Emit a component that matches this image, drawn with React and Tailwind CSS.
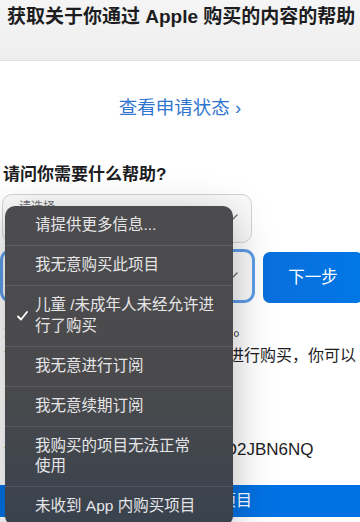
export default function App() {
  const items = [
    { lines: ["请提供更多信息..."] },
    { lines: ["我无意购买此项目"] },
    { lines: ["儿童 /未成年人未经允许进", "行了购买"], checked: true },
    { lines: ["我无意进行订阅"] },
    { lines: ["我无意续期订阅"] },
    { lines: ["我购买的项目无法正常", "使用"] },
    { lines: ["未收到 App 内购买项目"] },
  ];

  return (
    <div className="relative h-[522px] w-[360px] overflow-hidden bg-white font-['Liberation_Sans','Noto_Sans_CJK_SC',sans-serif] text-[#1d1d1f]">
      <header className="h-[61px] border-b border-[#e0e0e0] bg-gradient-to-b from-[#f5f5f5] to-[#eeeeee] pl-[7px] pt-[4px]">
        <h1 className="whitespace-nowrap text-[19px] font-bold leading-[26px]">
          获取关于你通过 Apple 购买的内容的帮助
        </h1>
      </header>

      <div className="mt-[34px] text-center text-[18.5px] leading-[26px] text-[#2f74cf]">
        查看申请状态 ›
      </div>

      <h2 className="mt-[42px] pl-[3px] text-[17px] font-bold leading-[24px]">请问你需要什么帮助?</h2>

      <div className="relative ml-[2px] mt-[7px] h-[49px] w-[250px] rounded-[10px] border border-[#d2d2d7] bg-[#fafafa] pl-[16px] pt-[4px]">
        <div className="text-[12px] leading-[16px] text-[#6e6e73]">请选择</div>
        <div className="text-[16px] leading-[22px]">申请退款</div>
        <svg className="absolute right-[13px] top-[19px]" width="11" height="7" viewBox="0 0 11 7" fill="none">
          <path d="M1 1l4.5 4.5L10 1" stroke="#6e6e73" strokeWidth="1.4" strokeLinecap="round" />
        </svg>
      </div>

      <div className="mt-[6px] flex items-end gap-[8px]">
        <div className="relative h-[54px] w-[255px] shrink-0 rounded-[11px] border-[3px] border-[#5c9ce6] bg-[#fafafa] pl-[14px] pt-[3px]">
          <div className="text-[12px] leading-[16px] text-[#6e6e73]">请选择</div>
          <div className="text-[16px] leading-[22px]">未成年人未经允许购买</div>
          <svg className="absolute right-[14px] top-[20px]" width="11" height="7" viewBox="0 0 11 7" fill="none">
            <path d="M1 1l4.5 4.5L10 1" stroke="#6e6e73" strokeWidth="1.4" strokeLinecap="round" />
          </svg>
        </div>
        <button className="h-[51px] w-[100px] shrink-0 rounded-[7px] bg-gradient-to-r from-[#0a6fdc] to-[#0077e6] text-[16.5px] text-white">
          下一步
        </button>
      </div>

      <div className="mt-[14px] pl-[4px] text-[16px] leading-[26px]">
        <div className="whitespace-nowrap">选择你希望申请退款的 App 项目。</div>
        <div className="whitespace-nowrap">如果儿童或未成年人未经你允许进行购买，你可以</div>
        <div className="whitespace-nowrap">申请退款。</div>
      </div>

      <div className="mt-[42px] whitespace-nowrap pl-[4px] text-[16px] leading-[26px]">
        订单编号（可在收据中找到）：<span className="text-[17px]"> D2JBN6NQ</span>
      </div>

      <div className="mt-[22px] flex h-[32px] w-full items-center justify-center bg-[#0071e3] text-[16px] text-white">
        选择你要退款的项目
      </div>

      <div className="absolute left-[5px] top-[206px] w-[228px] overflow-hidden rounded-[10px] bg-gradient-to-b from-[#4c4c4e] via-[#4a4a4c] via-55% to-[#39424e] shadow-[0_10px_40px_rgba(0,0,0,0.28)]">
        {items.map((item, i) => (
          <div
            key={i}
            className={`relative py-[9.25px] pl-[30px] pr-[5px] text-[15.5px] leading-[20.5px] text-[#e6e6e8] ${i > 0 ? "border-t border-white/10" : ""}`}
          >
            {item.checked && (
              <svg className="absolute left-[12px] top-1/2 -translate-y-1/2" width="11" height="10" viewBox="0 0 11 10" fill="none">
                <path d="M1 5.5l3 3L10 1" stroke="#ffffff" strokeWidth="1.8" strokeLinecap="round" strokeLinejoin="round" />
              </svg>
            )}
            {item.lines.map((l, j) => (
              <div key={j} className="whitespace-nowrap">{l}</div>
            ))}
          </div>
        ))}
      </div>
    </div>
  );
}
